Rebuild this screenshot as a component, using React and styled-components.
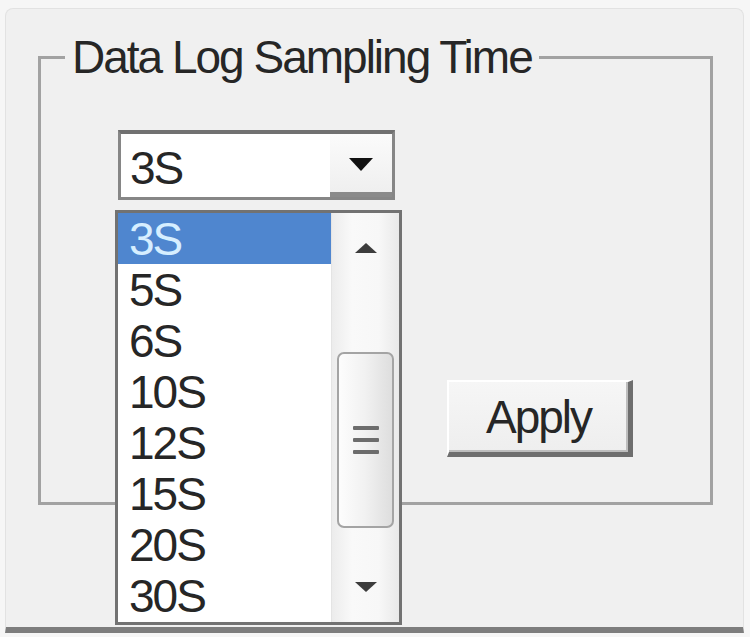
import React from 'react';
import styled, { createGlobalStyle } from 'styled-components';

const GlobalStyle = createGlobalStyle`
  html, body {
    margin: 0;
    padding: 0;
    background: #f6f6f6;
  }
  body {
    font-family: "Liberation Sans", Arial, sans-serif;
    color: #262626;
  }
`;

const Window = styled.div`
  box-sizing: border-box;
  margin: 8px 6px 0 5px;
  height: 625px;
  background: #f0f0f0;
  border: 1px solid #e2e2e2;
  border-bottom: 6px solid #7d7d7d;
  border-radius: 8px 8px 0 0;
`;

const GroupBox = styled.fieldset`
  box-sizing: border-box;
  margin: 22px 0 0 32px;
  padding: 0;
  width: 675px;
  height: 474px;
  border: 3px solid #a2a2a2;
  min-inline-size: 0;
`;

const Legend = styled.legend`
  margin-left: 24px;
  padding: 0 7px;
  font-size: 46px;
  line-height: 53px;
  letter-spacing: -2px;
  color: #262626;
`;

const ComboRow = styled.div`
  margin: 46px 0 0 77px;
`;

const ComboWrap = styled.div`
  position: relative;
  width: 277px;
`;

const ComboBox = styled.div`
  box-sizing: border-box;
  display: flex;
  width: 277px;
  height: 70px;
  background: #fff;
  border: 3px solid #868686;
  border-top: 4px solid #717171;
`;

const ComboText = styled.div`
  flex: 1;
  padding: 7px 0 0 9px;
  font-size: 46px;
  line-height: 55px;
  letter-spacing: -2px;
`;

const ComboButton = styled.div`
  box-sizing: border-box;
  width: 62px;
  display: flex;
  align-items: center;
  justify-content: center;
  background: linear-gradient(#fbfbfb, #efefef);
  border-bottom: 5px solid #8a8a8a;
  padding-top: 3px;
`;

const DropList = styled.div`
  position: absolute;
  left: -3px;
  top: 80px;
  box-sizing: border-box;
  width: 287px;
  height: 415px;
  display: flex;
  background: #fff;
  border: 3px solid #727272;
  z-index: 2;
`;

const Items = styled.div`
  width: 213px;
  display: flex;
  flex-direction: column;
`;

const Item = styled.div`
  box-sizing: border-box;
  height: 51px;
  flex: none;
  padding: 2px 0 0 11px;
  font-size: 46px;
  line-height: 49px;
  letter-spacing: -2px;
  color: ${p => (p.selected ? '#d6eeff' : '#262626')};
  background: ${p => (p.selected ? '#4f86cf' : 'transparent')};
`;

const ScrollBar = styled.div`
  flex: 1;
  display: flex;
  flex-direction: column;
  background: linear-gradient(to right, #ececec, #f9f9f9 30%, #f7f7f7 70%, #e9e9e9);
  border-left: 1px solid #e4e4e4;
`;

const ScrollArrow = styled.div`
  height: 70px;
  flex: none;
  display: flex;
  align-items: center;
  justify-content: center;
`;

const Track = styled.div`
  flex: 1;
  padding: 69px 5px 0 5px;
`;

const Thumb = styled.div`
  box-sizing: border-box;
  height: 176px;
  border: 2px solid #a4a4a4;
  border-radius: 7px;
  background: linear-gradient(to right, #fdfdfd, #f1f1f1 50%, #dedede);
  display: flex;
  flex-direction: column;
  align-items: center;
  justify-content: center;
  gap: 8px;
`;

const GripLine = styled.span`
  display: block;
  width: 26px;
  height: 4px;
  background: #6c6c6c;
  border-radius: 1px;
`;

const ButtonRow = styled.div`
  margin: 180px 0 0 406px;
`;

const Button = styled.button`
  box-sizing: border-box;
  width: 186px;
  height: 77px;
  padding: 0;
  display: flex;
  align-items: center;
  justify-content: center;
  background: linear-gradient(#f6f6f6, #eeeeee);
  border: none;
  border-top: 2px solid #ffffff;
  border-left: 2px solid #ffffff;
  border-right: 5px solid #6e6e6e;
  border-bottom: 5px solid #6e6e6e;
  box-shadow: inset -2px -2px 0 #bdbdbd;
  font-family: "Liberation Sans", Arial, sans-serif;
  font-size: 46px;
  letter-spacing: -2px;
  color: #262626;
`;

const Triangle = ({ dir, w, h, color }) => (
  <svg width={w} height={h} viewBox={`0 0 ${w} ${h}`}>
    <polygon
      points={dir === 'up' ? `0,${h} ${w / 2},0 ${w},${h}` : `0,0 ${w},0 ${w / 2},${h}`}
      fill={color}
    />
  </svg>
);

const options = ['3S', '5S', '6S', '10S', '12S', '15S', '20S', '30S'];

export default function App() {
  return (
    <>
      <GlobalStyle />
      <Window>
        <GroupBox>
          <Legend>Data Log Sampling Time</Legend>
          <ComboRow>
            <ComboWrap>
              <ComboBox>
                <ComboText>3S</ComboText>
                <ComboButton>
                  <Triangle dir="down" w={24} h={13} color="#111" />
                </ComboButton>
              </ComboBox>
              <DropList>
                <Items>
                  {options.map(o => (
                    <Item key={o} selected={o === '3S'}>{o}</Item>
                  ))}
                </Items>
                <ScrollBar>
                  <ScrollArrow>
                    <Triangle dir="up" w={22} h={10} color="#3c3c3c" />
                  </ScrollArrow>
                  <Track>
                    <Thumb>
                      <GripLine />
                      <GripLine />
                      <GripLine />
                    </Thumb>
                  </Track>
                  <ScrollArrow>
                    <Triangle dir="down" w={22} h={10} color="#3c3c3c" />
                  </ScrollArrow>
                </ScrollBar>
              </DropList>
            </ComboWrap>
          </ComboRow>
          <ButtonRow>
            <Button>Apply</Button>
          </ButtonRow>
        </GroupBox>
      </Window>
    </>
  );
}
